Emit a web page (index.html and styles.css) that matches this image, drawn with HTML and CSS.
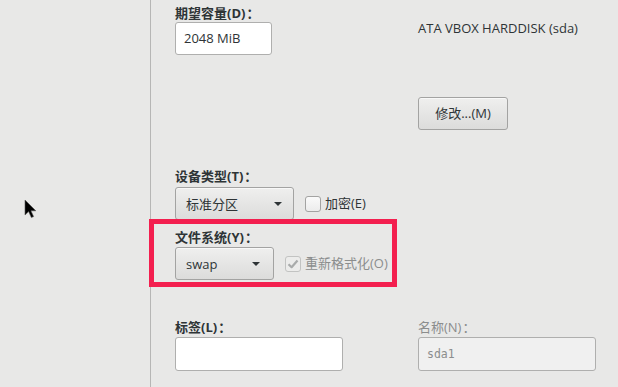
FILE: index.html
```html
<!DOCTYPE html>
<html lang="zh-CN">
<head>
<meta charset="utf-8">
<link rel="stylesheet" href="styles.css">
</head>
<body>
<div class="page">
  <div class="sidebar"></div>
  <div class="main">
    <div class="row row-top">
      <div class="col-left">
        <div class="label label-first">期望容量(D)<span class="colon">：</span></div>
        <div class="entry entry-size">2048 MiB</div>
      </div>
      <div class="col-right">
        <div class="disk">ATA VBOX HARDDISK (sda)</div>
        <div class="button">修改...(M)</div>
      </div>
    </div>

    <div class="label label-device">设备类型(T)<span class="colon">：</span></div>
    <div class="inline">
      <div class="combo combo-device"><span>标准分区</span><span class="arrow"></span></div>
      <div class="check"><span class="box"></span><span class="check-text">加密(E)</span></div>
    </div>

    <div class="label label-fs">文件系统(Y)<span class="colon">：</span></div>
    <div class="inline">
      <div class="combo combo-fs"><span>swap</span><span class="arrow"></span></div>
      <div class="check check-disabled">
        <span class="box box-checked">
          <svg width="12" height="10" viewBox="0 0 12 10"><path d="M1.5 5.2 L4.6 8.2 L10.5 1.5" fill="none" stroke="#a9abab" stroke-width="2.2" stroke-linejoin="round"/></svg>
        </span>
        <span class="check-text">重新格式化(O)</span>
      </div>
    </div>

    <div class="row row-bottom">
      <div class="col-left">
        <div class="label">标签(L)<span class="colon">：</span></div>
        <div class="entry entry-label"></div>
      </div>
      <div class="col-right">
        <div class="label label-disabled">名称(N)<span class="colon">：</span></div>
        <div class="entry entry-name">sda1</div>
      </div>
    </div>
  </div>

  <div class="highlight"></div>
  <svg class="cursor" width="14" height="20" viewBox="0 0 14 20">
    <path d="M1 1 L1 16 L4.6 12.6 L7.4 18.6 L9.6 17.6 L6.9 11.8 L11.8 11.8 Z" fill="#000" stroke="#555" stroke-width="0.6"/>
  </svg>
</div>
</body>
</html>
```

FILE: styles.css
```css
* { box-sizing: border-box; }
html, body {
  margin: 0;
  padding: 0;
  background: #e8e8e7;
}
body {
  font-family: "Open Sans", "Noto Sans CJK SC", sans-serif;
  font-size: 13px;
  color: #2e3436;
}
.page {
  position: relative;
  display: flex;
  width: 618px;
  height: 387px;
  overflow: hidden;
}
.sidebar {
  width: 151px;
  flex: none;
  border-right: 1px solid #b6b6b5;
}
.main {
  flex: 1;
  padding-left: 24px;
  display: flex;
  flex-direction: column;
  align-items: flex-start;
}
.row {
  display: flex;
}
.col-left {
  width: 243px;
  flex: none;
}
.col-right {
  display: flex;
  flex-direction: column;
  align-items: flex-start;
}
.label {
  font-weight: bold;
  line-height: 17px;
  height: 17px;
  white-space: nowrap;
}
.colon {
  font-family: "Noto Sans CJK TC", "Noto Sans CJK JP", sans-serif;
  margin-left: 1px;
}
.label-first { margin-top: 4px; }
.label-disabled { color: #8b8d8d; font-weight: normal; }
.entry {
  margin-top: 1px;
  height: 33px;
  background: #fff;
  border: 1px solid #afafae;
  border-radius: 3px;
  padding: 0 8px;
  line-height: 31px;
  white-space: nowrap;
}
.entry-size { width: 97px; }
.entry-label { width: 168px; height: 34px; margin-top: 2px; }
.entry-name {
  width: 178px;
  height: 34px;
  margin-top: 2px;
  background: #f0f0f0;
  color: #8b8d8d;
  font-family: "DejaVu Sans Mono", monospace;
  font-size: 11.5px;
  line-height: 32px;
}
.disk {
  margin-top: 20px;
  line-height: 17px;
  white-space: nowrap;
}
.button {
  margin-top: 60px;
  width: 90px;
  height: 33px;
  border: 1px solid #a3a3a2;
  border-radius: 3px;
  background: linear-gradient(#efefee, #dcdcdb);
  text-align: center;
  line-height: 31px;
  box-shadow: inset 0 1px 0 #f8f8f8;
}
.label-device { margin-top: 37px; }
.label-fs { margin-top: 8px; }
.inline {
  display: flex;
  align-items: center;
  margin-top: 3px;
}
.label-fs + .inline { margin-top: 2px; }
.combo {
  height: 33px;
  border: 1px solid #a3a3a2;
  border-radius: 3px;
  background: linear-gradient(#efefee, #dcdcdb);
  box-shadow: inset 0 1px 0 #f8f8f8;
  display: flex;
  align-items: center;
  justify-content: space-between;
  padding: 0 11px 0 10px;
}
.combo-device { width: 119px; }
.combo-fs { width: 99px; padding-right: 13px; }
.arrow {
  width: 0;
  height: 0;
  border-left: 4px solid transparent;
  border-right: 4px solid transparent;
  border-top: 4px solid #2e3436;
}
.check {
  display: flex;
  align-items: center;
  margin-left: 11px;
  white-space: nowrap;
}
.combo-fs + .check { margin-left: 11px; }
.box {
  width: 16px;
  height: 16px;
  border: 1px solid #a3a3a2;
  border-radius: 3px;
  background: linear-gradient(#fafafa, #ececec);
  display: flex;
  align-items: center;
  justify-content: center;
}
.box-checked {
  border-color: #c2c3c2;
  background: #ececeb;
}
.check-text {
  margin-left: 4px;
  line-height: 17px;
}
.check-disabled .check-text { color: #8b8d8d; }
.row-bottom { margin-top: 38px; }
.highlight {
  position: absolute;
  left: 149px;
  top: 219px;
  width: 248px;
  height: 68px;
  border: 5px solid #f31f4f;
}
.cursor {
  position: absolute;
  left: 24px;
  top: 199px;
}
```
